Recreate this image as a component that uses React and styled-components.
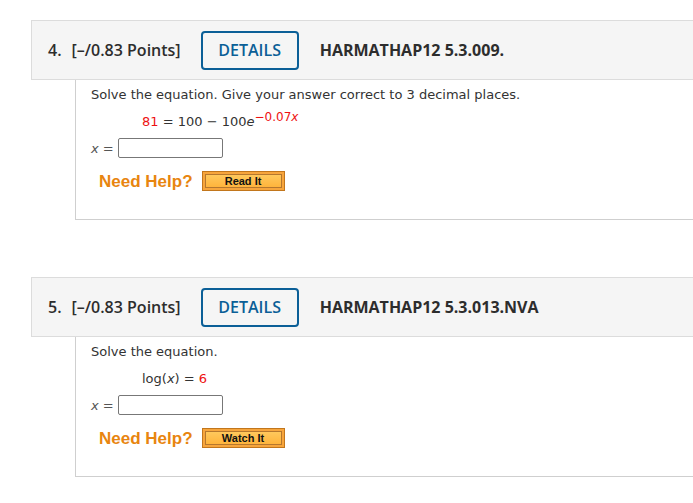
import React from 'react'
import styled, { createGlobalStyle } from 'styled-components'

const GlobalStyle = createGlobalStyle`
  html, body {
    margin: 0;
    padding: 0;
    background: #fff;
    overflow: hidden;
  }
`

const Page = styled.div`
  padding: 20px 0 0 31px;
  width: 720px;
`

const Question = styled.section`
  margin-bottom: 57px;
`

const Header = styled.div`
  display: flex;
  align-items: center;
  height: 58px;
  padding-left: 16px;
  background: #f5f5f5;
  border: 1px solid #dcdcdc;
  border-right: none;
  font-family: 'Open Sans', 'Liberation Sans', sans-serif;
  font-size: 16px;
  font-weight: 600;
  color: #2d2d2d;
`

const Number = styled.span`
  margin-right: 10px;
`

const DetailsButton = styled.button`
  margin-left: 20px;
  width: 98px;
  height: 39px;
  border: 2px solid #0b5f97;
  border-radius: 4px;
  background: #f5f5f5;
  color: #0b5f97;
  font-family: 'Open Sans', 'Liberation Sans', sans-serif;
  font-size: 16px;
  font-weight: 600;
  padding: 0;
`

const Code = styled.span`
  margin-left: 21px;
  font-weight: 700;
`

const Body = styled.div`
  margin-left: 44px;
  height: 140px;
  padding: 6px 0 0 15px;
  box-sizing: border-box;
  border-left: 1px solid #cfcfcf;
  border-bottom: 1px solid #cfcfcf;
  font-family: 'DejaVu Sans', Verdana, sans-serif;
  font-size: 13px;
  color: #333;
`

const Prompt = styled.div`
  line-height: 18px;
`

const Equation = styled.div`
  margin: 9px 0 0 51px;
  line-height: 18px;
  color: #333;
`

const Red = styled.span`
  color: #ee1111;
`

const Var = styled.i`
  font-style: italic;
`

const Sup = styled.sup`
  font-size: 12px;
  color: #ee1111;
  vertical-align: 0;
  position: relative;
  top: -5px;
`

const AnswerRow = styled.div`
  display: flex;
  align-items: center;
  margin-top: 7px;
  height: 20px;
  color: #555;
`

const Label = styled.span`
  width: 27px;
`

const AnswerInput = styled.input`
  width: 105px;
  height: 20px;
  box-sizing: border-box;
  border: 1px solid #777;
  border-radius: 2px;
  background: #fff;
  padding: 0 3px;
  margin: 0;
`

const HelpRow = styled.div`
  display: flex;
  align-items: center;
  margin: 13px 0 0 8px;
  height: 20px;
`

const HelpText = styled.span`
  font-family: 'Liberation Sans', Arial, sans-serif;
  font-size: 17px;
  font-weight: 700;
  color: #e8850f;
  position: relative;
  top: 1px;
`

const HelpButton = styled.button`
  margin-left: 9px;
  width: 83px;
  height: 20px;
  box-sizing: border-box;
  padding: 2px;
  border: 1px solid #c2761c;
  background: #f7a53c;
  display: flex;
`

const HelpInner = styled.span`
  flex: 1;
  border: 1px solid #b5772e;
  background: linear-gradient(#ffc85c, #ffb43c);
  font-family: 'Liberation Sans', Arial, sans-serif;
  font-size: 11px;
  font-weight: 700;
  color: #111;
  line-height: 12px;
  text-align: center;
`

const questions = [
  {
    num: '4.',
    code: 'HARMATHAP12 5.3.009.',
    prompt: 'Solve the equation. Give your answer correct to 3 decimal places.',
    equation: (
      <>
        <Red>81</Red> = 100 − 100<Var>e</Var>
        <Sup>
          −0.07<Var>x</Var>
        </Sup>
      </>
    ),
    help: 'Read It',
  },
  {
    num: '5.',
    code: 'HARMATHAP12 5.3.013.NVA',
    prompt: 'Solve the equation.',
    equation: (
      <>
        log(<Var>x</Var>) = <Red>6</Red>
      </>
    ),
    help: 'Watch It',
  },
]

export default function App() {
  return (
    <>
      <GlobalStyle />
      <Page>
        {questions.map((q) => (
          <Question key={q.num}>
            <Header>
              <Number>{q.num}</Number>
              <span>[–/0.83 Points]</span>
              <DetailsButton>DETAILS</DetailsButton>
              <Code>{q.code}</Code>
            </Header>
            <Body>
              <Prompt>{q.prompt}</Prompt>
              <Equation>{q.equation}</Equation>
              <AnswerRow>
                <Label>
                  <Var>x</Var> =
                </Label>
                <AnswerInput type="text" />
              </AnswerRow>
              <HelpRow>
                <HelpText>Need Help?</HelpText>
                <HelpButton>
                  <HelpInner>{q.help}</HelpInner>
                </HelpButton>
              </HelpRow>
            </Body>
          </Question>
        ))}
      </Page>
    </>
  )
}
